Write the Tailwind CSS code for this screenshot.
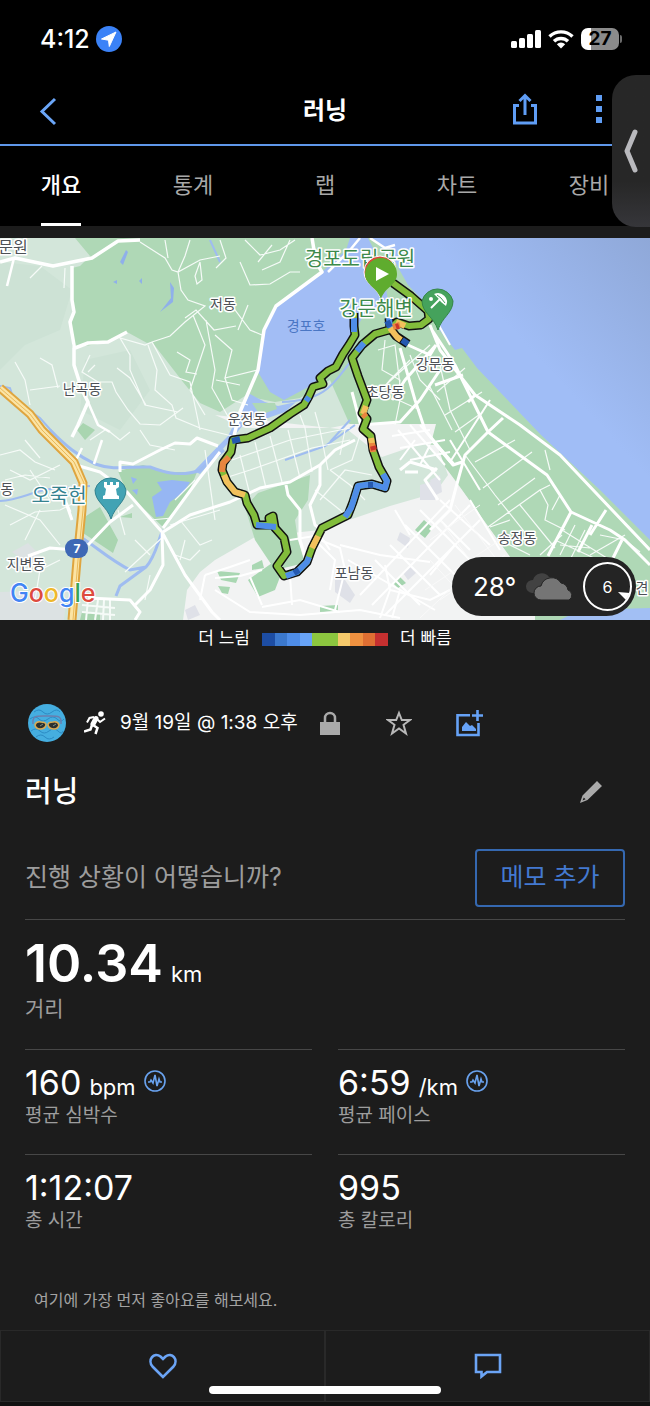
<!DOCTYPE html>
<html lang="ko">
<head>
  <meta charset="UTF-8" />
  <meta name="viewport" content="width=device-width, initial-scale=1.0" />
  <title>러닝</title>
  <script src="https://cdn.jsdelivr.net/npm/@tailwindcss/browser@4"></script>
</head>
<body class="bg-[#1c1c1c] text-white font-['Inter','Noto_Sans_CJK_KR',sans-serif]">
  <div class="relative w-full overflow-hidden">

    <!-- Status bar -->
    <div class="h-[78px] bg-black flex items-center justify-between pl-10 pr-7">
      <div class="flex items-center gap-[6px]">
        <span class="text-[25px] leading-8 font-medium">4:12</span>
        <svg class="w-[26px] h-[26px]" viewBox="0 0 26 26">
          <circle cx="13" cy="13" r="13" fill="#3b82f7" />
          <path d="M20 6 5.500 13l7 1.200.800 6.300z" fill="#fff" stroke="#fff" stroke-linejoin="round" />
        </svg>
      </div>
      <div class="flex items-center gap-[7px]">
        <svg class="w-[30px] h-[20px]" viewBox="0 0 30 20" fill="#fff">
          <rect x="0" y="12" width="6" height="7" rx="1.5" />
          <rect x="8" y="9" width="6" height="10" rx="1.5" />
          <rect x="16" y="5" width="6" height="14" rx="1.5" />
          <rect x="24" y="1" width="6" height="18" rx="1.5" />
        </svg>
        <svg class="w-[26px] h-[20px]" viewBox="0 0 26 20" fill="none" stroke="#fff" stroke-width="3.4">
          <path d="M1.500 7.500a16.500 16.500 0 0 1 23 0" />
          <path d="M6 12.300a10 10 0 0 1 14 0" />
          <path d="M13 19.500 8.800 15.300a6 6 0 0 1 8.400 0z" fill="#fff" stroke="none" />
        </svg>
        <div class="flex items-center gap-[1px]">
          <span class="w-[38px] h-[22px] rounded-[7px] bg-linear-to-r from-white from-27% to-[#8b8b8b] to-27% text-black text-[19px] leading-[22px] font-bold text-center">27</span>
          <span class="w-[2px] h-2 rounded-r bg-[#6b6b6b]"></span>
        </div>
      </div>
    </div>

    <!-- Title bar -->
    <header class="h-[68px] bg-black border-b-2 border-[#5f97ea] grid grid-cols-3 items-center">
      <button class="ml-9 w-6 h-8" aria-label="뒤로">
        <svg class="w-6 h-8" viewBox="0 0 24 32" fill="none" stroke="#6ba6f8" stroke-width="3"><path d="M19 4 6 16.500 19 29" /></svg>
      </button>
      <h1 class="text-2xl font-bold text-center">러닝</h1>
      <div class="flex items-center justify-end gap-[58px] pr-12 pb-1">
        <button class="w-[26px] h-8" aria-label="공유">
          <svg class="w-[26px] h-8" viewBox="0 0 26 32" fill="none" stroke="#5f9df5" stroke-width="3">
            <path d="M7 12.500H2.500V30h21V12.500H19" />
            <path d="M13 22V2.500M7.500 8 13 2.500 18.500 8" />
          </svg>
        </button>
        <button class="w-[6px] h-7" aria-label="더보기">
          <svg class="w-[6px] h-7" viewBox="0 0 6 28" fill="#5f9df5"><path d="M0 0h6v6H0zM0 11h6v6H0zM0 22h6v6H0z" /></svg>
        </button>
      </div>
    </header>

    <!-- Tabs -->
    <nav class="h-20 bg-black">
      <div class="-mx-[5px] h-full grid grid-cols-5 justify-items-center text-[22px] leading-[75px] text-[#a8a8a8]">
        <a href="#" class="pt-[2px] text-white font-medium border-b-3 border-white">개요</a>
        <a href="#" class="pt-[2px]">통계</a>
        <a href="#" class="pt-[2px]">랩</a>
        <a href="#" class="pt-[2px]">차트</a>
        <a href="#" class="pt-[2px]">장비</a>
      </div>
    </nav>

    <!-- Screen edge handle -->
    <button class="absolute right-0 top-[75px] w-[38px] h-[152px] rounded-l-[24px] bg-linear-to-b from-[#272727] from-70% to-[#36363a] flex items-center justify-center" aria-label="패널 열기">
      <svg class="w-4 h-[44px]" viewBox="0 0 16 44" fill="none" stroke="#b9b9bd" stroke-width="5" stroke-linecap="round" stroke-linejoin="round"><path d="M12 3 4 22l8 19" /></svg>
    </button>

    <!-- Map -->
    <section class="mt-3 relative">
      <svg class="block w-full" viewBox="0 238 650 382" role="img" aria-label="러닝 경로 지도">
        <defs>
          <linearGradient id="sea" x1="0" y1="1" x2="1" y2="0">
            <stop offset="0.6" stop-color="#a0bdf6" />
            <stop offset="1" stop-color="#8fa8d8" />
          </linearGradient>
        </defs>
        <rect x="0" y="238" width="650" height="382" fill="#d3e6da" />

        <!-- terrain -->
        <path d="M0 262 40 266 72 290 60 330 25 345 0 370zM85 360 130 350 150 390 120 430 80 410z" fill="#cde2d5" />
        <path d="M75 238 90 256 80 266 72 268V348L110 342 127 332 147 343 152 342 183 382 200 403 220 412 245 396 275 402 300 398 330 380 350 425H435L430 447 457 483 510 557 530 620H650V238z" fill="#afd8b6" />
        <path d="M215 415 245 428 330 428 350 424H436L430 447 457 483 510 557 535 590 535 620H183L187 590 200 572 215 560 255 537 320 530 390 506 435 493 448 475 437 445 420 444 382 457 348 430z" fill="#f2f3f3" />
        <path d="M0 592 67 590 64 620H0zM12 552 28 543 40 555 30 565z" fill="#dce2e3" />
        <path d="M310 475 258 493 245 507 255 540 275 570 305 563 298 540 295 520 308 500z" fill="#afd8b6" />
        <path d="M248 580 272 563 280 577 275 590 258 597zM217 571 240 573 236 583 221 580zM252 565 262 560 264 568 252 570zM320 606 338 605 338 611 320 612zM218 586 230 587 228 594 222 593z" fill="#a9d7b2" />
        <path d="M424 520 433 528 425 538 415 530zM400 577 406 583 398 588 393 583z" fill="#a4d4ae" />
        <path d="M118 471 143 465 170 472 197 472 187 497 163 527 127 493zM100 507 118 540 113 553 83 533 83 518zM77 430 83 423 95 430 85 440zM82 612 100 614 100 620H80zM120 517 132 513 132 518z" fill="#a9d5b0" />
        <path d="M335 580 345 580 355 595 350 603 335 592zM400 532 410 538 408 548 397 540zM420 485 437 480 435 500 420 500zM410 567 416 573 408 580 403 573zM430 480 440 475 442 492 434 496zM185 610 195 605 200 615 188 620z" fill="#dfe1e8" />

        <!-- water -->
        <path d="M372 238 395 262 408 285 430 308 438 328 455 350 462 348 477 368 541 435 600 490 650 540V238z" fill="url(#sea)" />
        <path d="M350 238H368L382 266 388 300 362 318 350 342 334 366 312 385 284 400 270 392 258 372 264 332 276 308 322 272 346 250z" fill="#a2bdf5" />
        <path d="M241 410 250 394 265 402 278 406 296 402 285 412 262 420 245 423 234 436 222 450 200 474 194 471 228 436z" fill="#a2bff4" />
        <path d="M157 482 172 480 190 482 184 492 170 502 163 516 156 517 152 497 162 490zM131 477 137 479 133 484zM132 490 138 489 137 495z" fill="#96b6f3" />
        <path d="M120 262 126 250 128 252 123 265zM139 281 142 278 142 284zM113 282 117 280 117 284zM170 282 174 288 173 302 160 312 171 298z" fill="#8fb0ea" />
        <path d="M560 620 580 610 650 608V620z" fill="#a2bff4" />
        <path d="M252 403 275 403 277 409 260 415z" fill="#afd8b6" />
        <g fill="none" stroke="#9fbcf0" stroke-width="2">
          <path d="M50 430C66 446 78 456 95 464 115 471 130 466 150 467 170 475 185 476 200 470L224 450" stroke-width="3" />
          <path d="M163 530C158 540 156 556 146 567L130 570C110 560 95 546 82 538M146 567 120 586 116 596" stroke-width="3" />
          <path d="M0 386 10 388 14 400 40 418 56 436M0 501C20 500 30 492 50 489L90 486M282 402C330 400 335 380 352 360M285 460 325 446 355 425M350 420 330 442M210 240 220 262" />
        </g>

        <!-- minor roads -->
        <g fill="none" stroke="#f6fbf8" stroke-width="1.2">
          <path d="M140 242 165 258 172 270 178 272 200 260 220 256M178 272 181 290 188 300 205 306 185 322 170 336 152 342M165 240 168 258M190 240 185 256 178 272M200 262 202 280 197 284 195 276zM152 342 145 345 120 338 130 355 130 370 145 405 178 412M117 368 130 378 146 405M148 345 157 370 155 390 172 405 176 418 200 428 240 438M100 382 112 382 116 392 128 410 140 424 160 425 183 408M40 358 52 365 58 388M15 362 25 380 30 405M30 390 60 386M152 342 170 375 190 382 200 430M193 315 205 345 195 375 190 390 205 415M206 320 215 370 212 388 230 420M177 352 190 360 186 372 197 374M90 355 82 372 98 382M185 318 196 310 214 330 236 326M65 268 64 288M30 278 42 266M95 365 88 372" />
          <path d="M220 240 226 258 216 268M240 262 250 285 270 284 290 272 300 272M245 240 260 255 280 250 295 240M220 300 235 310 250 330 262 335M215 335 232 350 225 378 258 370M225 378 232 400 248 405M248 305 238 330M258 262 272 245M216 380 240 385M290 240 280 262 262 270" />
          <path d="M300 415 305 428 312 472M315 412 320 430 328 470M240 455 250 495M255 442 266 488M270 436 282 482M288 430 300 478M225 478 250 470 312 448 350 440M232 460 290 440 350 428M330 470 350 485 365 500M320 500 345 470 372 475M315 490 340 510 350 520M360 435 352 460 330 470M345 430 340 455" />
          <path d="M385 340 382 370 400 380 398 400 420 410M378 350 395 345 400 385M410 360 390 380 375 398M430 345 400 372 378 392M400 400 395 425M410 355 420 380 440 400" />
          <path d="M440 365 450 410 470 450M437 392 465 368M445 415 482 392M455 432 483 412M430 387 452 430M475 462 515 440M483 488 532 452M498 505 535 478M465 455 495 495 535 545M488 527 540 490 548 505 545 520 565 530M520 505 555 548M545 450 550 470M490 527 510 520M560 495 552 510M540 490 550 485M500 540 530 555" />
          <path d="M555 540 620 570M562 530 610 560M575 525 560 555M585 530 570 560M600 535 625 540 640 552M590 555 625 535M560 545 590 548M540 555 562 535" />
          <path d="M0 455 20 450 35 462 55 470M25 440 40 458M5 480 25 475 50 478M10 525 35 512 60 510 80 500M5 505 40 520 60 545M25 540 40 510M90 440 105 430M140 430 150 445 175 450M110 432 120 440 130 432M60 560 40 570 35 600M125 572 165 535M180 520 200 545 212 540M175 555 190 560 200 550M150 575 145 600M205 450 215 520M175 500 195 480M170 525 220 510M30 470 50 500M185 540 180 560M118 510 125 535M60 465 30 480 10 470M150 520 172 518M135 540 150 555" />
          <path d="M98 600 95 620M88 600 86 620M104 600 103 620M110 600 110 620M82 605 115 608M82 612 115 615" stroke-width="2" />
        </g>

        <!-- city grid -->
        <g fill="none" stroke="#fff" stroke-width="2">
          <path d="M348 560 435 610M340 545 380 555 430 562M360 595 450 500M372 605 470 505M385 615 480 520M335 610 345 570 340 548 320 540M420 510 480 570M405 525 470 590M390 545 440 595M375 560 420 605M440 500 490 545M395 510 410 535M450 440 480 490M398 430 440 480M410 425 445 465M420 425 455 465M392 436 430 430M400 448 445 440M410 460 450 452M415 440 400 460M430 445 420 465" />
          <path d="M215 578 240 576 262 570M250 577 262 605M215 590 250 612 300 615 360 610 400 618M290 575 292 605M262 607 300 600 340 612M315 540 335 560 330 590M385 565 390 590 430 600 450 590M470 500 500 550M440 520 470 550M455 545 430 575M290 540 320 535 330 550M205 575 230 567 250 560M205 575 200 600M390 590 380 618M400 590 392 618" />
        </g>
        <path d="M440 520 500 600M455 505 520 590M430 560 480 615M425 590 500 540M440 600 505 555M430 540 480 505M420 618 460 580" fill="none" stroke="#fafafa" stroke-width="1" />

        <!-- main roads -->
        <g fill="none" stroke="#fff" stroke-linejoin="round">
          <path d="M0 262 15 258 53 266 92 258 118 241 140 240M72 266 72 300 74 312 70 322 74 345 74 365 82 390 88 402 78 425 72 437M75 348 88 343 108 342 127 332" stroke-width="3.500" />
          <path d="M14 258 7 286M88 402 98 425 110 432M75 462 82 448M94 464 102 440" stroke-width="2.500" />
          <path d="M312 238 316 262 322 272 276 306 264 330 258 370 240 412 233 440" stroke-width="3.500" />
          <path d="M360 238 350 250 328 272M370 238 385 248 395 245" stroke-width="2.500" />
          <path d="M76 465 100 472 127 492 162 532 185 575 212 612 220 620M162 532 163 565 150 590 135 605M120 472 120 462 133 464 160 450 175 443 190 444 197 438 218 446M163 532 190 515 230 502 260 488 290 482 320 465 335 450 355 440M220 452 198 480 163 528M133 505 110 522 88 545M75 550 50 548 28 556M70 512 65 500 72 520M88 598 130 600 140 612 135 620" stroke-width="3" />
          <path d="M320 465 320 485 310 505 315 525 322 530M286 485 288 495 300 510 300 540 306 560M400 470 410 462 437 470M405 472 418 472M437 468 425 480 438 500" stroke-width="3" />
          <path d="M430 325 440 350 475 395 520 425 560 455 650 550M432 330 455 365 488 432 547 475 571 512 610 530 625 540 650 565M436 345 405 380 392 400M408 345 430 355 436 345M400 348 415 400 425 430 453 465 462 462M488 432 465 455 458 480 450 510 430 530M503 418 488 432M435 385 463 375M468 402 475 395M571 512 548 556M592 525 578 552M606 510 590 535M622 540 612 560M352 392 362 430M360 425 400 422 420 400 440 370" stroke-width="3" />
          <path d="M433 315 450 345M433 442 450 462 490 400" stroke-width="2" />
        </g>

        <!-- highway -->
        <path d="M0 388 30 414 42 430 74 462 83 483 82 510 77 560 72 620" fill="none" stroke="#dfa53f" stroke-width="9" />
        <path d="M0 388 30 414 42 430 74 462 83 483 82 510 77 560 72 620" fill="none" stroke="#fbe4a5" stroke-width="5" />
        <path d="M0 388 30 414 42 430 74 462 84 483 83 510 78 560 73 620" fill="none" stroke="#e9b95a" stroke-width="1" />

        <!-- place labels -->
        <g font-size="14" fill="#4d5156" stroke="#fff" stroke-width="3" stroke-linejoin="round" paint-order="stroke" text-anchor="middle">
          <text x="223" y="309">저동</text>
          <text x="82" y="394">난곡동</text>
          <text x="247" y="424">운정동</text>
          <text x="385" y="397">초당동</text>
          <text x="435" y="369">강문동</text>
          <text x="7" y="494">동</text>
          <text x="26" y="569">지변동</text>
          <text x="354" y="578">포남동</text>
          <text x="517" y="543">송정동</text>
          <text x="642" y="593">견</text>
          <text x="306" y="331" fill="#4a76c4" stroke="none">경포호</text>
          <text x="13" y="253" font-size="16">문원</text>
          <text x="59" y="503" font-size="20" fill="#35828f">오죽헌</text>
          <text x="360" y="266" font-size="20" fill="#3d8a4c">경포도립공원</text>
        </g>

        <!-- route -->
        <g fill="none" stroke-linejoin="round">
          <path d="M354 313V326L355 335 349 345 343 354 336 367 328 371 320 378 323 384 313 387 309 396 304 405 290 414 270 428 248 438 233 440 231 452 223 463 222 470 227 482 235 492 245 495 247 503 254 515 257 525 270 525 269 518 273 516 275 528 284 538 287 552 277 566 284 576 297 572 307 562 312 548 322 528 336 521 348 515 353 502 358 486 372 484 385 488 387 481 379 467 373 450 371 436 363 429 367 419 362 413 367 400 358 376 352 358 362 345 375 334 389 330 397 322 409 326 421 325 429 319 428 311 411 296 393 283M389 318 390 328 396 336 408 344" stroke="#111" stroke-width="9" />
          <path d="M354 313V326L355 335 349 345 343 354 336 367 328 371 320 378 323 384 313 387 309 396 304 405 290 414 270 428 248 438 233 440 231 452 223 463 222 470 227 482 235 492 245 495 247 503 254 515 257 525 270 525 269 518 273 516 275 528 284 538 287 552 277 566 284 576 297 572 307 562 312 548 322 528 336 521 348 515 353 502 358 486 372 484 385 488 387 481 379 467 373 450 371 436 363 429 367 419 362 413 367 400 358 376 352 358 362 345 375 334 389 330 397 322 409 326 421 325 429 319 428 311 411 296 393 283" stroke="#82bd3b" stroke-width="6" />
          <path d="M354 318V332M357 351 364 343M256 525 276 527M286 576 297 572 307 562 309 557M345 517 351 508 353 502 358 486 372 484 385 488 387 481 383 474M389 318 390 328M306 401 309 397" stroke="#4f8de8" stroke-width="6" />
          <path d="M232 441 240 439M294 573 299 570M368 485 373 485M387 321 390 327M402 340 408 344" stroke="#2559b0" stroke-width="6" />
          <path d="M224 475 227 482 235 492 245 495M312 548 318 536M373 450 371 438M396 322 405 326M366 406 363 414M390 328 397 337 401 340" stroke="#f2c05c" stroke-width="6" />
          <path d="M229 457 223 463 222 472M372 443 373 452M363 414 366 417M393 327 400 325" stroke="#e9853f" stroke-width="6" />
          <path d="M373 446 374 450M396 327 399 326" stroke="#c9352c" stroke-width="6" />
        </g>
        <text x="376" y="316" font-size="20" fill="#3d8a4c" stroke="#fff" stroke-width="3" stroke-linejoin="round" paint-order="stroke" text-anchor="middle">강문해변</text>

        <!-- start pin -->
        <path d="M380 297C376 286 364 284 364 272a16 16 0 0 1 32 0C396 284 384 286 380 297z" fill="#d94a3a" stroke="#fff" />
        <path d="M381 299C377 287 365 285 365 274a16 16 0 0 1 32 0C397 285 385 287 381 299z" fill="#5fac2e" />
        <path d="M376 267v14l13-7z" fill="#fff" />

        <!-- beach pin -->
        <path d="M438 330C434 317 422 313 422 301a16 16 0 0 1 31 0C453 313 442 317 438 330z" fill="#45a25c" stroke="#358649" />
        <circle cx="431" cy="299" r="2" fill="#fff" />
        <path d="M434 294a9 9 0 0 1 12 12l-5-4-3-4z" fill="#fff" />
        <path d="M441 298 431 308" stroke="#fff" stroke-width="2" />
        <path d="M437 295 441 298 445 303" fill="none" stroke="#45a25c" />

        <!-- museum pin -->
        <path d="M111 519C107 506 95 502 95 490a16 16 0 0 1 31 0C126 502 115 506 111 519z" fill="#42a3b4" stroke="#32828f" />
        <path d="M104 482h3v3h3v-3h3v3h3v-3h3v5l-3 2 1 6 2 1v3h-16v-3l2-1 1-6-2-2z" fill="#fff" />

        <!-- road shield -->
        <rect x="65" y="539" width="23" height="19" rx="9" fill="#3e68b5" />
        <text x="77" y="553" font-size="12" font-weight="700" fill="#fff" text-anchor="middle">7</text>

        <!-- attribution -->
        <text x="10" y="602" font-size="25" font-weight="500" stroke="#fff" stroke-width="2" paint-order="stroke"><tspan fill="#4285f4">G</tspan><tspan fill="#dd4b3e">o</tspan><tspan fill="#eeb82c">o</tspan><tspan fill="#4285f4">g</tspan><tspan fill="#36a455">l</tspan><tspan fill="#dd4b3e">e</tspan></text>
      </svg>

      <!-- Weather -->
      <div class="absolute right-[14px] bottom-1 w-[184px] h-[59px] rounded-full bg-[#242424] flex items-center justify-between pl-[21px] pr-[4px]">
        <span class="text-[26px]">28°</span>
        <svg class="w-[50px] h-7" viewBox="0 0 50 28">
          <path d="M7 20a6.500 6.500 0 0 1 1-13 9 9 0 0 1 16-3 7 7 0 0 1 7 7v9z" fill="#424242" />
          <path d="M16 27a7 7 0 0 1 0-14 11 11 0 0 1 20-3 8.500 8.500 0 0 1 7 7 5.500 5.500 0 0 1 1 10z" fill="#757575" stroke="#242424" />
        </svg>
        <div class="relative w-[49px] h-[49px] rounded-full border-2 border-white flex items-center justify-center text-base leading-5">
          6
          <svg class="absolute right-0 bottom-2 w-3 h-3" viewBox="0 0 12 12"><path d="M0 3 12 4 8 11z" fill="#fff" /></svg>
        </div>
      </div>
    </section>

    <!-- Pace legend -->
    <div class="h-[38px] flex items-center justify-center gap-3 text-[17px]">
      <span>더 느림</span>
      <div class="w-[126px] h-[13px] grid grid-cols-10">
        <span class="bg-[#1d4da3]"></span>
        <span class="bg-[#3b78cd]"></span>
        <span class="bg-[#4e8de8]"></span>
        <span class="bg-[#68a3f6]"></span>
        <span class="bg-[#8cc63f]"></span>
        <span class="bg-[#8cc63f]"></span>
        <span class="bg-[#f5c96b]"></span>
        <span class="bg-[#ef9140]"></span>
        <span class="bg-[#df6f33]"></span>
        <span class="bg-[#c53030]"></span>
      </div>
      <span>더 빠름</span>
    </div>

    <main class="px-[25px]">
      <!-- Activity info -->
      <div class="mt-[45px] h-10 flex items-center">
        <svg class="ml-[3px] w-[38px] h-[38px]" viewBox="0 0 38 38">
          <circle cx="19" cy="19" r="19" fill="#45aee0" />
          <path d="M6 8q5-4 9 0t9 0 8 0M2 15q5-4 9 0t9 0 9 0 7 0M3 27q5-4 9 0t9 0 9 0 5 0M8 33q5-4 9 0t9 0" fill="none" stroke="#2c8bc4" />
          <path d="M5 20C4 11 9 12 19 12s15-1 14 8" fill="none" stroke="#6a7fae" stroke-width="1.500" />
          <path d="M7 21q1-4 6-3 5 0 5 3-1 4-6 4-4 0-5-4zM20 21q0-3 5-3 5-1 6 3-1 4-5 4-5 0-6-4z" fill="#2a3030" stroke="#d8ab55" stroke-width="1.500" />
          <path d="M12 22 15 20M25 22 28 20" stroke="#7e8f83" />
        </svg>
        <svg class="ml-[18px] w-[22px] h-6" viewBox="0 0 22 24" fill="none" stroke="#fff">
          <circle cx="17" cy="3" r="2.800" fill="#fff" stroke="none" />
          <path d="M12 7.500 9 13" stroke-width="5" stroke-linecap="round" />
          <path d="M10 6 5.500 7 3 11.500M13 8 16 11 21 7.500" stroke-width="2" />
          <path d="M9 14 13.500 17 11.500 23M8 14 6.500 18.500 0 20.500" stroke-width="2.500" />
        </svg>
        <span class="ml-[14px] text-[19px] whitespace-nowrap">9월 19일 @ 1:38 오후</span>
        <button class="ml-[22px] w-5 h-6" aria-label="비공개">
          <svg class="w-5 h-6" viewBox="0 0 20 24"><path d="M5 11V7a5 5 0 0 1 10 0v4" fill="none" stroke="#aaa" stroke-width="2.500" /><path d="M0 11h20v13H0z" fill="#aaa" /></svg>
        </button>
        <button class="ml-[46px] w-[26px] h-[26px]" aria-label="즐겨찾기">
          <svg class="w-[26px] h-[26px]" viewBox="0 0 26 26" fill="none" stroke="#b8b8b8" stroke-width="2"><path d="M13 3 15.800 10H24L17.500 14.800 20 23.500 13 18.500 6 23.500 8.500 14.800 2 10H10.200z" /></svg>
        </button>
        <button class="ml-11 w-[27px] h-[27px]" aria-label="사진 추가">
          <svg class="w-[27px] h-[27px]" viewBox="0 0 27 27" fill="none" stroke="#66a2f6" stroke-width="2.600">
            <path d="M14 5.300H1.500V25H22.500V13M16 5.500H27M21.500 0V11" />
            <path d="M6 21v-4l4-5 4 4 2-1 4 4v2z" fill="#66a2f6" stroke="none" />
          </svg>
        </button>
      </div>

      <div class="mt-6 h-[50px] flex items-center justify-between pr-[23px]">
        <h2 class="text-[29px] font-medium">러닝</h2>
        <button class="w-[22px] h-[22px]" aria-label="이름 편집">
          <svg class="w-[22px] h-[22px]" viewBox="0 0 22 22"><path d="M17 0 22 5 7.500 19 0 22 2.500 14.500zM3.800 16.500 2.500 19.600 5.600 18.200z" fill="#aaa" fill-rule="evenodd" /></svg>
        </button>
      </div>

      <!-- Notes -->
      <div class="mt-8 pb-3 flex items-center justify-between border-b border-[#474747]">
        <p class="text-[25px] text-[#9d9d9d]">진행 상황이 어떻습니까?</p>
        <button class="w-[150px] h-[58px] rounded-[4px] border-2 border-[#3568b0] text-[25px] text-[#4379d0]">메모 추가</button>
      </div>

      <!-- Stats -->
      <dl class="grid grid-cols-2 gap-x-[26px]">
        <div class="col-span-2 h-[129px] pt-[13px] flex flex-col-reverse justify-end">
          <dt class="text-[21px] leading-7 text-[#9d9d9d]">거리</dt>
          <dd class="text-[52px] leading-[62px] font-semibold">10.34<span class="ml-2 text-[22px] leading-none font-normal">km</span></dd>
        </div>
        <div class="h-[105px] pt-3 border-t border-[#474747] flex flex-col-reverse justify-end">
          <dt class="text-[19px] leading-6 text-[#9d9d9d]">평균 심박수</dt>
          <dd class="flex items-baseline gap-2 text-[34px] leading-[42px]">160 <span class="text-[22px] leading-none">bpm</span>
            <svg class="self-center mb-1 w-[22px] h-[22px]" viewBox="0 0 22 22" fill="none" stroke="#69a2ee" stroke-width="1.600"><circle cx="11" cy="11" r="10" /><path d="M4 12h2l1-2 2 3 2-8 2 11 2-7 1 3h2" /></svg>
          </dd>
        </div>
        <div class="h-[105px] pt-3 border-t border-[#474747] flex flex-col-reverse justify-end">
          <dt class="text-[19px] leading-6 text-[#9d9d9d]">평균 페이스</dt>
          <dd class="flex items-baseline gap-2 text-[34px] leading-[42px]">6:59 <span class="text-[22px] leading-none">/km</span>
            <svg class="self-center mb-1 w-[22px] h-[22px]" viewBox="0 0 22 22" fill="none" stroke="#69a2ee" stroke-width="1.600"><circle cx="11" cy="11" r="10" /><path d="M4 12h2l1-2 2 3 2-8 2 11 2-7 1 3h2" /></svg>
          </dd>
        </div>
        <div class="h-[105px] pt-3 border-t border-[#474747] flex flex-col-reverse justify-end">
          <dt class="text-[19px] leading-6 text-[#9d9d9d]">총 시간</dt>
          <dd class="text-[34px] leading-[42px]">1:12:07</dd>
        </div>
        <div class="h-[105px] pt-3 border-t border-[#474747] flex flex-col-reverse justify-end">
          <dt class="text-[19px] leading-6 text-[#9d9d9d]">총 칼로리</dt>
          <dd class="text-[34px] leading-[42px]">995</dd>
        </div>
      </dl>

      <p class="mt-7 mb-[17px] ml-[9px] text-base leading-[26px] text-[#a3a3a3]">여기에 가장 먼저 좋아요를 해보세요.</p>
    </main>

    <!-- Like and comment -->
    <footer class="relative grid grid-cols-2 h-[76px] border-b-4 border-[#111]">
      <button class="border border-[#292929] flex items-center justify-center" aria-label="좋아요">
        <svg class="w-[30px] h-[26px]" viewBox="0 0 30 26" fill="none" stroke="#6ba4f5" stroke-width="2.600"><path d="M15 24 4.500 13.500C-1 7 6-1.500 12.500 3.500L15 6 17.500 3.500C24-1.500 31 7 25.500 13.500z" /></svg>
      </button>
      <button class="border border-[#292929] flex items-center justify-center" aria-label="댓글">
        <svg class="w-[28px] h-[26px]" viewBox="0 0 28 26" fill="none" stroke="#6ba4f5" stroke-width="2.600"><path d="M2 2H26V19H13L7.500 23.500V19H2z" /></svg>
      </button>
      <span class="absolute left-1/2 -translate-x-1/2 bottom-[8px] w-[232px] h-2 rounded-full bg-white"></span>
    </footer>
  </div>
</body>
</html>
